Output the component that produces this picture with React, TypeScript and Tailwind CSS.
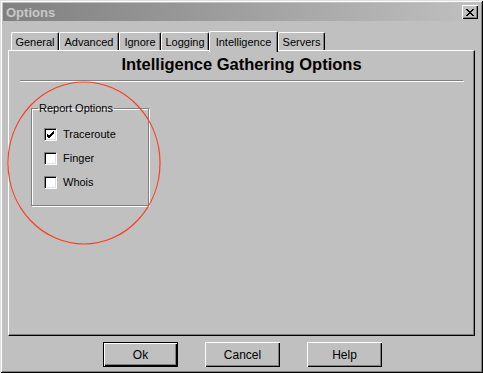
import React from "react";

const font = { fontFamily: '"Liberation Sans", Arial, sans-serif' };

const tabs = [
  { label: "General", w: "w-[48px]" },
  { label: "Advanced", w: "w-[60px]" },
  { label: "Ignore", w: "w-[42px]" },
  { label: "Logging", w: "w-[48px]" },
  { label: "Intelligence", w: "w-[69px]", active: true },
  { label: "Servers", w: "w-[47px]" },
];

function Check({ checked }: { checked?: boolean }) {
  return (
    <span className="w-[13px] h-[13px] bg-white border-t border-l border-t-[#808080] border-l-[#808080] border-b border-r border-b-white border-r-white shadow-[inset_1px_1px_0_#000,inset_-1px_-1px_0_#dfdfdf] flex items-center justify-center">
      {checked && (
        <svg width="9" height="9" viewBox="0 0 9 9">
          <path d="M1 4 L3 6 L8 1 M1 5 L3 7 L8 2 M1 6 L3 8 L8 3" stroke="#000" strokeWidth="1" fill="none" shapeRendering="crispEdges" />
        </svg>
      )}
    </span>
  );
}

function Btn({ label, def }: { label: string; def?: boolean }) {
  return (
    <button
      className={`w-[75px] h-[25px] bg-[#c0c0c0] text-[12px] text-black flex items-center justify-center ${
        def
          ? "border border-black shadow-[inset_1px_1px_0_#fff,inset_-1px_-1px_0_#000,inset_-2px_-2px_0_#808080]"
          : "shadow-[inset_1px_1px_0_#fff,inset_-1px_-1px_0_#000,inset_-2px_-2px_0_#808080]"
      }`}
    >
      {label}
    </button>
  );
}

export default function App() {
  return (
    <div
      style={font}
      className="relative w-[483px] h-[373px] bg-[#c0c0c0] shadow-[inset_1px_1px_0_#dfdfdf,inset_-1px_-1px_0_#000,inset_2px_2px_0_#fff,inset_-2px_-2px_0_#808080] p-[3px] flex flex-col overflow-hidden"
    >
      {/* title bar */}
      <div className="h-[18px] bg-gradient-to-r from-[#808080] to-[#c0c0c0] flex items-center justify-between pl-[3px] pr-[2px]">
        <span className="text-[13px] font-bold text-[#c8c8c8] leading-none">Options</span>
        <span className="w-[16px] h-[14px] bg-[#c0c0c0] shadow-[inset_1px_1px_0_#fff,inset_-1px_-1px_0_#000,inset_-2px_-2px_0_#808080] flex items-center justify-center">
          <svg width="8" height="7" viewBox="0 0 8 7">
            <path d="M0 0 L7 7 M1 0 L8 7 M7 0 L0 7 M8 0 L1 7" stroke="#000" strokeWidth="1" shapeRendering="crispEdges" />
          </svg>
        </span>
      </div>

      {/* tabs */}
      <div className="flex items-end ml-[8px] mt-[9px] h-[20px] relative z-10">
        {tabs.map((t) =>
          t.active ? (
            <div
              key={t.label}
              className={`${t.w} h-[21px] mb-[-2px] bg-[#c0c0c0] border-t border-l border-t-white border-l-white border-r border-r-black shadow-[inset_-1px_0_0_#808080] rounded-t-[2px] flex items-start justify-center pt-[2px] text-[11px] text-black`}
            >
              {t.label}
            </div>
          ) : (
            <div
              key={t.label}
              className={`${t.w} h-[18px] bg-[#c0c0c0] border-t border-l border-t-white border-l-white border-r border-r-black shadow-[inset_-1px_0_0_#808080] rounded-t-[2px] flex items-center justify-center pt-[2px] text-[11px] text-black`}
            >
              {t.label}
            </div>
          )
        )}
      </div>

      {/* panel */}
      <div className="mx-[5px] h-[286px] border-t border-l border-t-white border-l-white border-r border-b border-r-black border-b-black shadow-[inset_-1px_-1px_0_#808080] flex flex-col">
        <div className="text-center text-[16.5px] font-bold text-black mt-[2px] leading-[22px]">
          Intelligence Gathering Options
        </div>
        <div className="ml-[11px] mr-[10px] mt-[5px] h-[2px] border-t border-t-[#808080] border-b border-b-white border-r border-r-white" />

        <fieldset className="ml-[22px] mt-[20px] w-[118px] h-[104px] border border-[#808080] shadow-[1px_1px_0_#fff,inset_1px_1px_0_#fff] px-[12px] pt-[14px] flex flex-col gap-[11px]">
          <legend className="text-[11px] text-black px-[1px] ml-[-6px] leading-[12px]">Report Options</legend>
          {[
            { l: "Traceroute", c: true },
            { l: "Finger" },
            { l: "Whois" },
          ].map((r) => (
            <label key={r.l} className="flex items-center gap-[6px] text-[11px] text-black h-[13px]">
              <Check checked={r.c} />
              {r.l}
            </label>
          ))}
        </fieldset>
      </div>

      {/* buttons */}
      <div className="flex gap-[27px] ml-[100px] mt-[6px]">
        <Btn label="Ok" def />
        <Btn label="Cancel" />
        <Btn label="Help" />
      </div>

      {/* red annotation circle */}
      <svg className="absolute left-[7px] top-[81px] pointer-events-none" width="156" height="166" viewBox="0 0 156 166">
        <ellipse cx="77" cy="82" rx="76" ry="81" fill="none" stroke="#ff3b1a" strokeWidth="1.2" />
      </svg>
    </div>
  );
}
